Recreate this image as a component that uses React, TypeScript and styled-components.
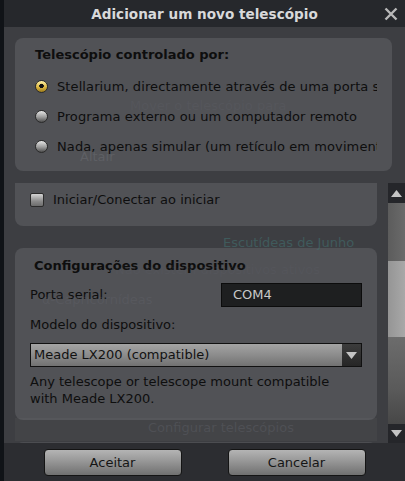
import React from "react";
import styled, { createGlobalStyle } from "styled-components";

const GlobalStyle = createGlobalStyle`
  html, body { margin: 0; padding: 0; background: #111317; }
  body { font-family: "DejaVu Sans", "Liberation Sans", sans-serif; }
  * { box-sizing: border-box; }
`;

const Frame = styled.div`
  position: relative;
  width: 405px;
  height: 481px;
  padding-left: 4px;
  background: #101317;
  overflow: hidden;
`;

const Dialog = styled.div`
  height: 100%;
  display: flex;
  flex-direction: column;
  background: #3d3e42;
`;

const TitleBar = styled.div`
  position: relative;
  height: 27px;
  flex: none;
  display: flex;
  align-items: center;
  justify-content: center;
  background: #26282c;
  color: #d8d9da;
  font-weight: bold;
  font-size: 13.6px;
`;

const CloseButton = styled.div`
  position: absolute;
  right: 7px;
  top: 7px;
  width: 14px;
  height: 14px;
  display: flex;
`;

const Body = styled.div`
  flex: 1;
  min-height: 0;
  display: flex;
  flex-direction: column;
  padding-top: 11px;
`;

const Panel = styled.div`
  background: #515256;
  border-radius: 8px;
  color: #0e0e0e;
  font-size: 13px;
`;

const TopPanel = styled(Panel)`
  margin: 0 13px 0 11px;
  height: 133px;
  padding: 9px 15px 0 20px;
  overflow: hidden;
`;

const Heading = styled.div`
  font-weight: bold;
  font-size: 13px;
  height: 16px;
  line-height: 16px;
  white-space: nowrap;
`;

const RadioList = styled.div`
  display: flex;
  flex-direction: column;
  gap: 14px;
  margin-top: 15px;
`;

const RadioRow = styled.div`
  display: flex;
  align-items: center;
  gap: 9px;
  height: 16px;
  white-space: nowrap;
  overflow: hidden;
`;

const RadioDot = styled.span<{ $on?: boolean }>`
  flex: none;
  width: 13px;
  height: 13px;
  border-radius: 50%;
  border: 1px solid #2a2a2a;
  background: ${(p) =>
    p.$on
      ? "radial-gradient(circle at 50% 45%, #111 0 2px, transparent 2.5px), linear-gradient(#fff2a8, #d9b23a 60%, #9a7a1e)"
      : "linear-gradient(#e6e6e6, #9c9c9c 55%, #4e4e4e)"};
`;

const RadioText = styled.span`
  white-space: nowrap;
  letter-spacing: 0.1px;
`;

const ScrollRow = styled.div`
  flex: 1;
  min-height: 0;
  display: flex;
  margin-top: 12px;
`;

const ScrollViewport = styled.div`
  flex: 1;
  min-width: 0;
  overflow: hidden;
  padding: 0 11px;
`;

const ScrollInner = styled.div`
  margin-top: -12px;
  display: flex;
  flex-direction: column;
  gap: 22px;
`;

const CheckPanel = styled(Panel)`
  padding: 21px 15px 19px;
  display: flex;
  align-items: center;
  gap: 9px;
`;

const CheckBox = styled.span`
  flex: none;
  width: 14px;
  height: 14px;
  border: 1px solid #2b2b2b;
  border-radius: 2px;
  background: linear-gradient(#d4d4d4, #8a8a8a 60%, #6c6c6c);
`;

const DevicePanel = styled(Panel)`
  padding: 10px 15px 13px;
  display: flex;
  flex-direction: column;
`;

const DeviceHeading = styled(Heading)`
  padding-left: 4px;
`;

const FieldRow = styled.div`
  display: flex;
  align-items: center;
  justify-content: space-between;
  margin-top: 9px;
`;

const Label = styled.div`
  line-height: 16px;
`;

const TextInput = styled.div`
  width: 141px;
  height: 24px;
  background: #1e1f20;
  border: 1px solid #0c0c0c;
  color: #c9c9c9;
  font-size: 13px;
  line-height: 22px;
  padding-left: 11px;
`;

const ModelLabel = styled(Label)`
  margin-top: 10px;
`;

const Combo = styled.div`
  margin-top: 10px;
  height: 24px;
  border: 1px solid #111;
  display: flex;
  background: linear-gradient(#a4a4a4, #8c8c8c 50%, #727272);
`;

const ComboText = styled.div`
  flex: 1;
  padding-left: 3px;
  line-height: 22px;
  color: #121212;
  font-size: 13px;
`;

const ComboArrow = styled.div`
  width: 19px;
  display: flex;
  align-items: center;
  justify-content: center;
  background: linear-gradient(#3c3c3c, #262626);
`;

const Description = styled.div`
  margin-top: 6px;
  line-height: 17px;
`;

const NextPanel = styled(Panel)`
  height: 40px;
  background: #4c4d51;
`;

const Scrollbar = styled.div`
  width: 17px;
  flex: none;
  display: flex;
  flex-direction: column;
`;

const ScrollButton = styled.div<{ $h: number }>`
  height: ${(p) => p.$h}px;
  flex: none;
  background: #25262a;
  display: flex;
  align-items: center;
  justify-content: center;
`;

const Track = styled.div`
  flex: 1;
  display: flex;
  flex-direction: column;
`;

const TrackPart = styled.div<{ $h?: number; $bg: string }>`
  ${(p) => (p.$h ? `height: ${p.$h}px; flex: none;` : "flex: 1;")}
  background: ${(p) => p.$bg};
`;

const Footer = styled.div`
  height: 38px;
  flex: none;
  background: #2c2d31;
  display: flex;
  justify-content: center;
  gap: 46px;
  padding-top: 6px;
`;

const Button = styled.div`
  width: 138px;
  height: 27px;
  border: 1px solid #141414;
  border-radius: 4px;
  background: linear-gradient(#b4b4b4, #939393 50%, #707070);
  color: #151515;
  font-size: 13px;
  display: flex;
  align-items: center;
  justify-content: center;
`;

const Ghost = styled.div<{ $x: number; $y: number; $c: string }>`
  position: absolute;
  left: ${(p) => p.$x}px;
  top: ${(p) => p.$y}px;
  color: ${(p) => p.$c};
  font-size: 13px;
  white-space: nowrap;
  pointer-events: none;
`;

const GhostStrip = styled.div`
  position: absolute;
  left: 15px;
  top: 418px;
  width: 362px;
  height: 23px;
  background: rgba(255, 255, 255, 0.03);
  pointer-events: none;
`;

const Tri = ({ up }: { up?: boolean }) => (
  <svg width="11" height="7" viewBox="0 0 11 7">
    <path d={up ? "M0 7 L5.5 0 L11 7 Z" : "M0 0 L5.5 7 L11 0 Z"} fill="#c4c4c4" />
  </svg>
);

export default function App() {
  return (
    <>
      <GlobalStyle />
      <Frame>
        <Dialog>
          <TitleBar>
            Adicionar um novo telescópio
            <CloseButton>
              <svg width="14" height="14" viewBox="0 0 14 14">
                <path d="M1.5 1.5 L12.5 12.5 M12.5 1.5 L1.5 12.5" stroke="#b8b8b8" strokeWidth="2.4" />
              </svg>
            </CloseButton>
          </TitleBar>
          <Body>
            <TopPanel>
              <Heading>Telescópio controlado por:</Heading>
              <RadioList>
                <RadioRow>
                  <RadioDot $on />
                  <RadioText>Stellarium, directamente através de uma porta serial</RadioText>
                </RadioRow>
                <RadioRow>
                  <RadioDot />
                  <RadioText>Programa externo ou um computador remoto</RadioText>
                </RadioRow>
                <RadioRow>
                  <RadioDot />
                  <RadioText>Nada, apenas simular (um retículo em movimento)</RadioText>
                </RadioRow>
              </RadioList>
            </TopPanel>
            <ScrollRow>
              <ScrollViewport>
                <ScrollInner>
                  <CheckPanel>
                    <CheckBox />
                    <span>Iniciar/Conectar ao iniciar</span>
                  </CheckPanel>
                  <DevicePanel>
                    <DeviceHeading>Configurações do dispositivo</DeviceHeading>
                    <FieldRow>
                      <Label>Porta serial:</Label>
                      <TextInput>COM4</TextInput>
                    </FieldRow>
                    <ModelLabel>Modelo do dispositivo:</ModelLabel>
                    <Combo>
                      <ComboText>Meade LX200 (compatible)</ComboText>
                      <ComboArrow>
                        <Tri />
                      </ComboArrow>
                    </Combo>
                    <Description>
                      Any telescope or telescope mount compatible
                      <br />
                      with Meade LX200.
                    </Description>
                  </DevicePanel>
                  <NextPanel />
                </ScrollInner>
              </ScrollViewport>
              <Scrollbar>
                <ScrollButton $h={20}>
                  <Tri up />
                </ScrollButton>
                <Track>
                  <TrackPart $h={58} $bg="linear-gradient(90deg, #5c5c5c, #6a6a6a)" />
                  <TrackPart $h={76} $bg="linear-gradient(90deg, #959595, #a8a8a8)" />
                  <TrackPart $bg="linear-gradient(#6c6c6c, #5a5a5a 60%, #474747)" />
                </Track>
                <ScrollButton $h={19}>
                  <Tri />
                </ScrollButton>
              </Scrollbar>
            </ScrollRow>
          </Body>
          <Footer>
            <Button>Aceitar</Button>
            <Button>Cancelar</Button>
          </Footer>
        </Dialog>
        <Ghost $x={130} $y={98} $c="rgba(110,112,118,0.16)">Mover o telescópio para</Ghost>
        <Ghost $x={80} $y={149} $c="rgba(120,122,128,0.35)">Altair</Ghost>
        <Ghost $x={223} $y={235} $c="rgba(66,110,110,0.6)">Escutídeas de Junho</Ghost>
        <Ghost $x={115} $y={262} $c="rgba(110,112,118,0.12)">Não existem dispositivos ativos</Ghost>
        <Ghost $x={42} $y={292} $c="rgba(110,112,118,0.22)">α-Capricornídeas</Ghost>
        <Ghost $x={148} $y={420} $c="rgba(100,102,108,0.35)">Configurar telescópios</Ghost>
        <GhostStrip />
      </Frame>
    </>
  );
}
